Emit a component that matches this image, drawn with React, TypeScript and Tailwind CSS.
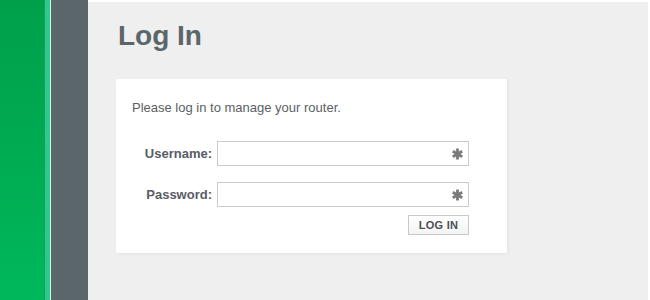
export default function App() {
  return (
    <div className="flex h-[300px] w-[650px] bg-white font-['Liberation_Sans',Arial,sans-serif]">
      {/* Side rails */}
      <div className="w-[44px] bg-gradient-to-b from-[#00a04b] via-[#00ab52] to-[#00b85c]" />
      <div className="w-px bg-[#1c9a62]" />
      <div className="w-[5px] bg-[#2fc98b]" />
      <div className="w-px bg-[#e8f0ee]" />
      <div className="w-[37px] bg-[#5b666b]" />

      {/* Main */}
      <div className="mt-[2px] mr-[2px] flex-1 bg-[#efefef] pl-[28px] pt-[20px]">
        <h1 className="ml-[2px] h-[28px] text-[28px] leading-[28px] font-bold text-[#5b666b]">Log In</h1>

        <div className="mt-[29px] w-[391px] bg-white pl-[16px] pt-[21px] pb-[18px] shadow-[1px_1px_3px_rgba(0,0,0,0.06)]">
          <p className="text-[13px] leading-[16px] text-[#5a5f63]">Please log in to manage your router.</p>

          <div className="mt-[25px] flex flex-col gap-[16px]">
            <Field label="Username:" />
            <Field label="Password:" />
          </div>

          <div className="mt-[8px] flex w-[337px] justify-end">
            <button className="h-[20px] w-[61px] border border-[#c8c8c8] bg-gradient-to-b from-white to-[#f4f4f4] text-[11px] leading-[18px] font-bold tracking-[0.3px] text-[#4a4f55]">
              LOG IN
            </button>
          </div>
        </div>
      </div>
    </div>
  )
}

function Field({ label }: { label: string }) {
  return (
    <div className="flex items-center">
      <label className="w-[80px] text-right text-[13px] leading-[16px] font-bold text-[#595c66]">{label}</label>
      <div className="relative ml-[5px] h-[25px] w-[252px] border border-[#cbcbcb] bg-white">
        <svg className="absolute right-[5px] top-[6px]" width="11" height="12" viewBox="0 0 11 12">
          <g stroke="#7a7a7a" strokeWidth="2.8" strokeLinecap="butt">
            <line x1="5.5" y1="0.5" x2="5.5" y2="11.5" />
            <line x1="0.8" y1="3.2" x2="10.2" y2="8.8" />
            <line x1="0.8" y1="8.8" x2="10.2" y2="3.2" />
          </g>
        </svg>
      </div>
    </div>
  )
}
